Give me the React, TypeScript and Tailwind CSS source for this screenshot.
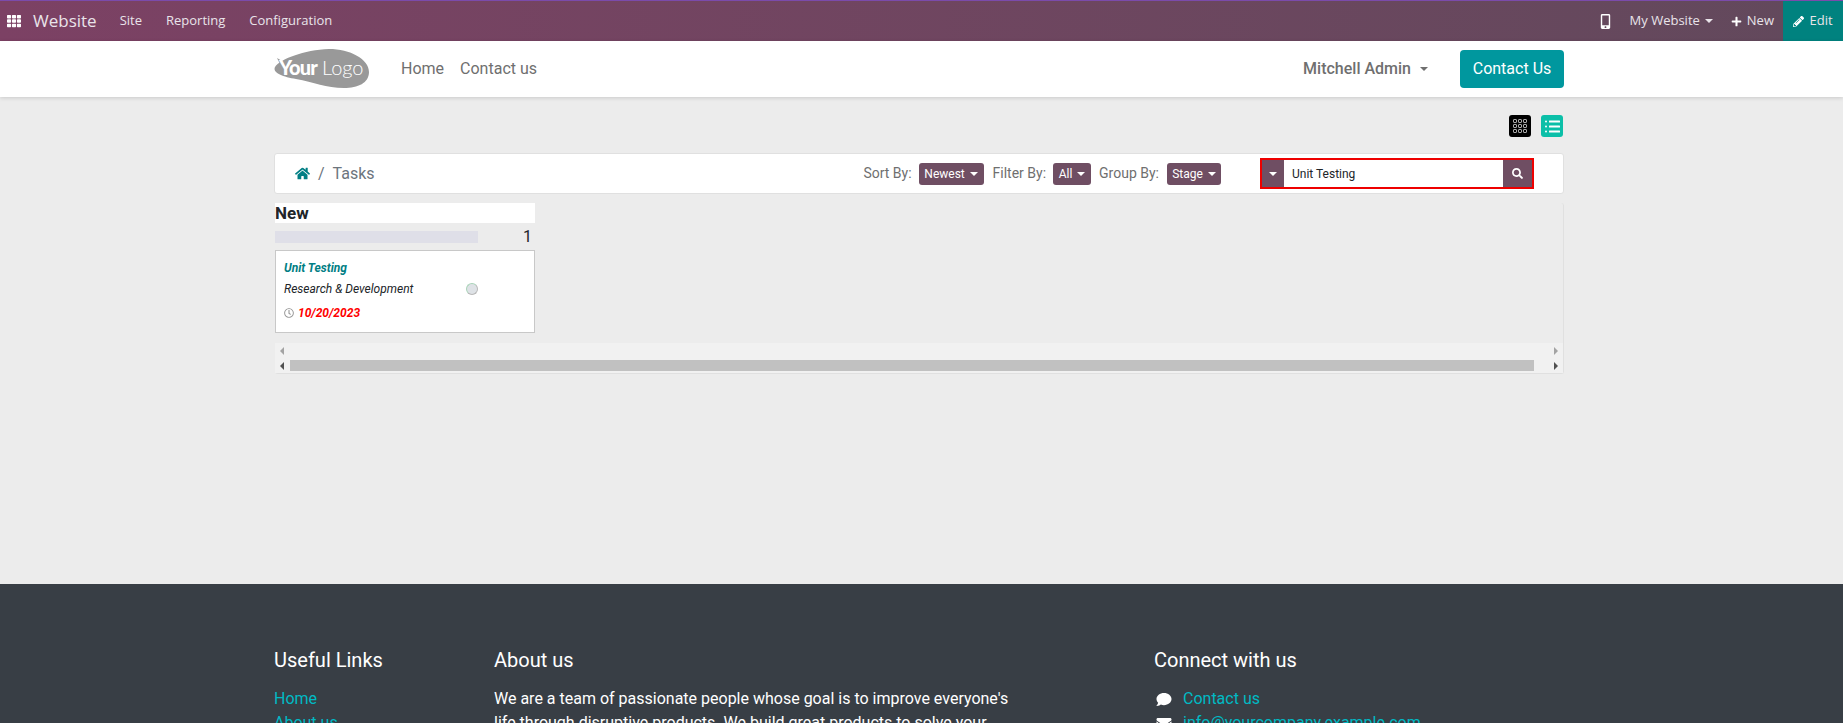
import React from "react";
import {
  FaComment,
  FaEnvelope,
  FaHome,
  FaMobileAlt,
  FaPencilAlt,
  FaPlus,
  FaRegClock,
  FaSearch,
  FaTh,
} from "react-icons/fa";

function Caret({ className = "" }: { className?: string }) {
  return (
    <span
      className={`inline-block w-0 h-0 border-x-[4px] border-x-transparent border-t-[4px] ${className}`}
    />
  );
}

function Logo() {
  return (
    <svg width="96" height="40" viewBox="0 0 96 40" className="overflow-visible">
      <path
        d="M1 18 C6 10 30 1 55 0 C76 0 95 10 95 23 C95 34 84 39 70 39 C52 39 40 33 22 30 C10 28 -2 24 1 18 Z"
        fill="#999999"
      />
      <path d="M3 9 L8 12 L6 15 Z" fill="#999999" />
      <text
        x="5"
        y="26"
        fontFamily="Lato, sans-serif"
        fontWeight="900"
        fontSize="20"
        letterSpacing="-0.8"
        fill="#ffffff"
      >
        Your
      </text>
      <text
        x="48"
        y="26"
        fontFamily="Lato, sans-serif"
        fontWeight="300"
        fontSize="20"
        letterSpacing="0"
        fill="#ffffff"
      >
        Logo
      </text>
    </svg>
  );
}

function TopBar() {
  return (
    <div className="flex h-[41px] shrink-0 items-center justify-between border-t border-[#7b4bab] bg-gradient-to-r from-[#7c4164] to-[#62495c] font-['Open_Sans',sans-serif] text-[13px] text-[#e9e4ea]">
      <div className="flex items-center">
        <FaTh className="ml-[7px] text-[14px] text-white" />
        <span className="ml-[12px] text-[17px]">Website</span>
        <span className="ml-[23px]">Site</span>
        <span className="ml-[24px]">Reporting</span>
        <span className="ml-[24px]">Configuration</span>
      </div>
      <div className="flex h-full items-center">
        <FaMobileAlt className="text-[15px] text-white" />
        <span className="ml-[17px]">My Website</span>
        <Caret className="ml-[5px] border-t-[#e9e4ea]" />
        <FaPlus className="ml-[18px] text-[11px] text-white" />
        <span className="ml-[5px]">New</span>
        <div className="ml-[9px] flex h-full w-[60px] items-center justify-center gap-[5px] bg-[#00827f]">
          <FaPencilAlt className="text-[11px] text-white" />
          <span>Edit</span>
        </div>
      </div>
    </div>
  );
}

function Header() {
  return (
    <div className="relative z-10 h-[56px] shrink-0 bg-white shadow-[0_1px_4px_rgba(0,0,0,0.15)]">
      <div className="ml-[274px] flex h-full w-[1290px] items-center">
        <Logo />
        <span className="ml-[31px] text-[16px] text-[#6f6f6f]">Home</span>
        <span className="ml-[16px] text-[16px] text-[#6f6f6f]">Contact us</span>
        <span className="ml-auto text-[16px] font-medium text-[#6f6f6f]">
          Mitchell Admin
        </span>
        <Caret className="ml-[9px] border-t-[#6f6f6f]" />
        <button className="ml-[32px] h-[38px] w-[104px] rounded-[4px] bg-[#00979e] text-[16px] text-white">
          Contact Us
        </button>
      </div>
    </div>
  );
}

function ViewButtons() {
  return (
    <div className="flex justify-end gap-[10px] pr-[1px] pt-[18px]">
      <div className="flex h-[22px] w-[22px] items-center justify-center rounded-[3px] bg-black">
        <svg width="14" height="14" viewBox="0 0 14 14" fill="none" stroke="#cccccc" strokeWidth="0.9">
          {[0, 5, 10].map((y) =>
            [0, 5, 10].map((x) => (
              <rect key={`${x}-${y}`} x={x + 0.5} y={y + 0.5} width="3" height="3" rx="0.6" />
            ))
          )}
        </svg>
      </div>
      <div className="flex h-[22px] w-[22px] items-center justify-center rounded-[3px] bg-[#0bbfa8]">
        <svg width="15" height="13" viewBox="0 0 15 13" fill="#ffffff">
          <circle cx="1" cy="1.5" r="1" />
          <rect x="4" y="0.5" width="11" height="2" rx="0.5" />
          <circle cx="1" cy="6.5" r="1" />
          <rect x="4" y="5.5" width="11" height="2" rx="0.5" />
          <circle cx="1" cy="11.5" r="1" />
          <rect x="4" y="10.5" width="11" height="2" rx="0.5" />
        </svg>
      </div>
    </div>
  );
}

function DropButton({ label, width }: { label: string; width: string }) {
  return (
    <div
      className={`flex h-[22px] items-center justify-center gap-[5px] rounded-[3px] bg-[#6f4e63] text-[12px] text-white ${width}`}
    >
      {label}
      <Caret className="border-x-[3px] border-t-[3px] border-t-white" />
    </div>
  );
}

function Toolbar() {
  return (
    <div className="mt-[16px] flex h-[41px] items-center rounded-[3px] border border-[#e0e0e0] bg-white">
      <FaHome className="ml-[20px] text-[15px] text-[#017e84]" />
      <span className="ml-[8px] text-[16px] text-[#6c757d]">/</span>
      <span className="ml-[8px] text-[16px] text-[#6c757d]">Tasks</span>
      <div className="ml-auto flex items-center text-[14px] text-[#6f6f6f]">
        <span>Sort By:</span>
        <div className="ml-[7px]">
          <DropButton label="Newest" width="w-[65px]" />
        </div>
        <span className="ml-[9px]">Filter By:</span>
        <div className="ml-[7px]">
          <DropButton label="All" width="w-[38px]" />
        </div>
        <span className="ml-[8px]">Group By:</span>
        <div className="ml-[8px]">
          <DropButton label="Stage" width="w-[54px]" />
        </div>
      </div>
      <div className="ml-[39px] mr-[29px] flex h-[31px] w-[274px] border-2 border-[#ee0000] bg-white">
        <div className="flex w-[22px] items-center justify-center bg-[#6f4e63]">
          <Caret className="border-x-[3px] border-t-[3px] border-t-white" />
        </div>
        <div className="flex flex-1 items-center pl-[8px] text-[12px] text-[#212529]">
          Unit Testing
        </div>
        <div className="flex w-[29px] items-center justify-center bg-[#6f4e63]">
          <FaSearch className="text-[11px] text-white" />
        </div>
      </div>
    </div>
  );
}

function TaskCard() {
  return (
    <div className="mt-[7px] h-[83px] w-[260px] border border-[#c8c8c8] bg-white pl-[8px] pt-[8px] text-[12px] italic">
      <div className="font-bold leading-[18px] text-[#017e84]">Unit Testing</div>
      <div className="relative mt-[3px] leading-[18px] text-[#212529]">
        Research &amp; Development
        <span className="absolute left-[182px] top-[3px] h-[12px] w-[12px] rounded-full border border-[#b8b8b8] border-t-[#a9d3b8] border-l-[#a9d3b8] bg-[#dee2e6]" />
      </div>
      <div className="mt-[6px] flex items-center leading-[18px]">
        <FaRegClock className="text-[10px] text-[#999999]" />
        <span className="ml-[4px] font-bold text-[#ff0000]">10/20/2023</span>
      </div>
    </div>
  );
}

function ScrollRow({ thumb }: { thumb?: boolean }) {
  return (
    <div className="flex h-[15px] items-center justify-between bg-[#f1f1f1] px-[5px]">
      <span className={`h-0 w-0 border-y-[4px] border-r-[4px] border-y-transparent ${thumb ? "border-r-[#505050]" : "border-r-[#a3a3a3]"}`} />
      {thumb && <span className="ml-[6px] mr-auto h-[11px] w-[1244px] bg-[#c1c1c1]" />}
      <span className={`h-0 w-0 border-y-[4px] border-l-[4px] border-y-transparent ${thumb ? "border-l-[#505050]" : "border-l-[#a3a3a3]"}`} />
    </div>
  );
}

function Board() {
  return (
    <div className="ml-[1px] mt-[9px] rounded-[3px] border-r border-b border-[#e0e0e0]">
      <div className="h-[140px] w-[260px]">
        <div className="h-[20px] bg-white text-[17px] font-bold leading-[20px] text-[#212529]">
          New
        </div>
        <div className="mt-[8px] flex h-[12px] items-center justify-between">
          <div className="h-full w-[203px] bg-[#dfdfe8]" />
          <span className="mr-[3px] text-[16px] text-[#212529]">1</span>
        </div>
        <TaskCard />
      </div>
      <ScrollRow />
      <ScrollRow thumb />
    </div>
  );
}

function Footer() {
  return (
    <div className="flex-1 bg-[#383e45] pt-[64px] text-[16px] leading-[24px] text-white">
      <div className="ml-[274px] flex w-[1290px]">
        <div className="w-[220px]">
          <h5 className="text-[20px] leading-[24px]">Useful Links</h5>
          <div className="mt-[15px] text-[#00bac4]">
            <div>Home</div>
            <div>About us</div>
          </div>
        </div>
        <div className="w-[660px]">
          <h5 className="text-[20px] leading-[24px]">About us</h5>
          <p className="mt-[15px] w-[520px]">
            We are a team of passionate people whose goal is to improve
            everyone's life through disruptive products. We build great products
            to solve your business problems.
          </p>
        </div>
        <div>
          <h5 className="text-[20px] leading-[24px]">Connect with us</h5>
          <div className="mt-[15px] text-[#00bac4]">
            <div className="flex items-center">
              <FaComment className="ml-[2px] w-[16px] text-[15px] text-white" />
              <span className="ml-[11px]">Contact us</span>
            </div>
            <div className="flex items-center">
              <FaEnvelope className="ml-[2px] w-[16px] text-[15px] text-white" />
              <span className="ml-[11px]">info@yourcompany.example.com</span>
            </div>
          </div>
        </div>
      </div>
    </div>
  );
}

export default function App() {
  return (
    <div className="flex h-screen flex-col overflow-hidden bg-[#ececec] font-['Roboto',sans-serif]">
      <TopBar />
      <Header />
      <div className="h-[487px] shrink-0">
        <div className="ml-[274px] w-[1290px]">
          <ViewButtons />
          <Toolbar />
          <Board />
        </div>
      </div>
      <Footer />
    </div>
  );
}
